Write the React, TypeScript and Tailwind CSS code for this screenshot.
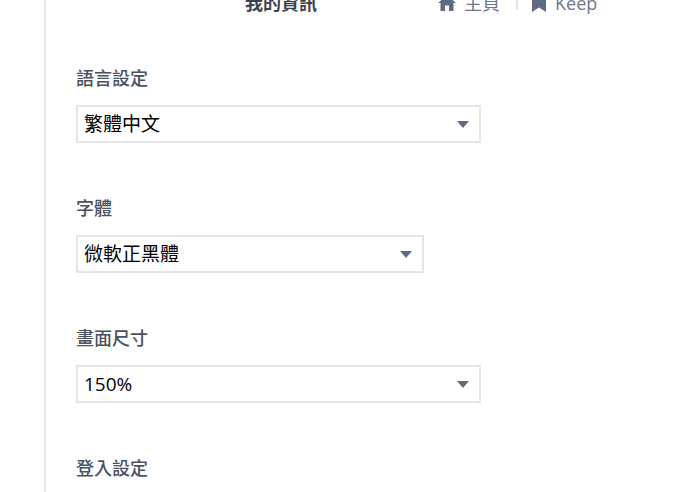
import React from 'react';

function HomeIcon() {
  return (
    <svg width="18" height="16" viewBox="0 0 18 16" className="fill-[#5f6b85]">
      <path d="M9 0 L18 8 L15.5 8 L15.5 16 L11 16 L11 10.5 L7 10.5 L7 16 L2.5 16 L2.5 8 L0 8 Z" />
    </svg>
  );
}

function BookmarkIcon() {
  return (
    <svg width="14" height="18" viewBox="0 0 14 18" className="fill-[#5f6b85]">
      <path d="M1 0 H13 A1 1 0 0 1 14 1 V18 L7 13.5 L0 18 V1 A1 1 0 0 1 1 0 Z" />
    </svg>
  );
}

function Field({ label, value, width }: { label: string; value: string; width: string }) {
  return (
    <div>
      <div className="h-[22px] text-[18px] leading-[22px] font-medium text-[#4a5160]">{label}</div>
      <div
        className={`mt-[16px] flex h-[38px] items-center justify-between border-2 border-[#e2e5ec] pl-[6px] pr-[10px] text-[19px] text-black ${width}`}
      >
        <span>{value}</span>
        <span className="h-0 w-0 border-x-[6px] border-t-[7px] border-x-transparent border-t-[#5f6b85]" />
      </div>
    </div>
  );
}

export default function App() {
  return (
    <div className="h-[492px] w-[692px] overflow-hidden bg-white font-['Open_Sans','Noto_Sans_CJK_TC',sans-serif]">
      <div className="-mt-[9px] ml-[44px] h-[501px] border-l-2 border-[#e5e8ef]">
        <header className="flex h-[24px] items-center">
          <span className="ml-[199px] text-[18px] font-bold text-[#3a4150]">我的資訊</span>
          <span className="ml-[121px] flex items-center gap-[8px] text-[18px] text-[#6d7890]">
            <HomeIcon />
            主頁
          </span>
          <span className="ml-[16px] h-[14px] w-[2px] bg-[#dfe2ea]" />
          <span className="ml-[14px] flex items-center gap-[9px] text-[18px] text-[#6d7890]">
            <BookmarkIcon />
            Keep
          </span>
        </header>
        <main className="mt-[52px] flex flex-col gap-[54px] pl-[30px]">
          <Field label="語言設定" value="繁體中文" width="w-[405px]" />
          <Field label="字體" value="微軟正黑體" width="w-[348px]" />
          <Field label="畫面尺寸" value="150%" width="w-[405px]" />
          <div className="h-[22px] text-[18px] leading-[22px] font-medium text-[#4a5160]">登入設定</div>
        </main>
      </div>
    </div>
  );
}
